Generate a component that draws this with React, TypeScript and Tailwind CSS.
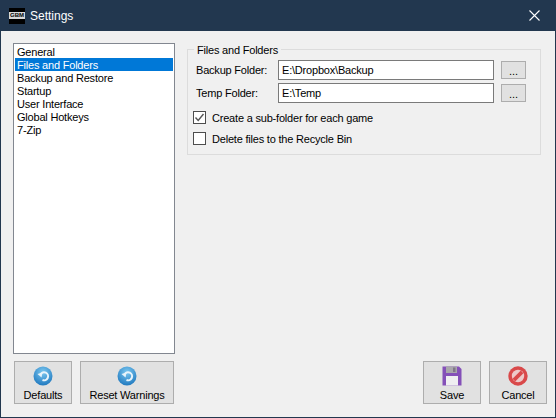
import React from "react";

const font = { fontFamily: '"Liberation Sans", Arial, sans-serif' };

function Refresh() {
  return (
    <svg width="20" height="20" viewBox="0 0 20 20">
      <defs>
        <radialGradient id="blue" cx="50%" cy="30%" r="75%">
          <stop offset="0%" stopColor="#7cc8f0" />
          <stop offset="100%" stopColor="#1a74bc" />
        </radialGradient>
      </defs>
      <circle cx="10" cy="10" r="9.5" fill="url(#blue)" />
      <path d="M7.5 8.5 A4 4 0 1 1 9.5 14" fill="none" stroke="#e8f4fb" strokeWidth="2" />
      <path d="M4.5 8 L9.5 6.5 L8.5 11.5 Z" fill="#e8f4fb" />
    </svg>
  );
}

function Floppy() {
  return (
    <svg width="20" height="20" viewBox="0 0 20 20">
      <path d="M0.5 0.5 H17 L19.5 3 V19.5 H0.5 Z" fill="#8450b8" />
      <rect x="4" y="0.5" width="11" height="6.5" fill="#a9a7ab" />
      <rect x="11" y="1.5" width="2.5" height="4.5" fill="#7f7688" />
      <rect x="4" y="10" width="12" height="9.5" fill="#efeff1" />
    </svg>
  );
}

function Stop() {
  return (
    <svg width="20" height="20" viewBox="0 0 20 20">
      <circle cx="10" cy="10" r="9.7" fill="#d9494a" />
      <circle cx="10" cy="10" r="6.2" fill="#eec9c9" />
      <path d="M4.6 12.8 L12.8 4.6 L15.4 7.2 L7.2 15.4 Z" fill="#d9494a" />
    </svg>
  );
}

function ActionButton({ w, label, icon }: { w: string; label: string; icon: React.ReactNode }) {
  return (
    <div className={`${w} h-[43px] bg-[#e1e1e1] border border-[#adadad] flex flex-col items-center text-[11px] tracking-[-0.2px] leading-[14px] text-black`}>
      <div className="h-[25px] pt-[4px] flex items-start justify-center">{icon}</div>
      <span className="mt-[1px]">{label}</span>
    </div>
  );
}

function FolderRow({ label, value }: { label: string; value: string }) {
  return (
    <div className="flex items-center h-[20px]">
      <span className="w-[90px] pl-[8px] text-[11px] tracking-[-0.2px] whitespace-nowrap">{label}</span>
      <div className="w-[216px] h-[20px] bg-white border border-[#7a7a7a] pl-[3px] text-[11px] tracking-[-0.2px] leading-[18px]">{value}</div>
      <div className="ml-[7px] w-[25px] h-[18px] bg-[#e1e1e1] border border-[#adadad] text-[11px] leading-[19px] text-center">...</div>
    </div>
  );
}

function CheckRow({ label, checked }: { label: string; checked?: boolean }) {
  return (
    <div className="flex items-center h-[13px] pl-[5px]">
      <div className="w-[13px] h-[13px] bg-white border border-[#4d4d4d] flex items-center justify-center">
        {checked && (
          <svg width="11" height="11" viewBox="0 0 11 11">
            <path d="M1.5 5.5 L4.2 8.5 L9.5 2" fill="none" stroke="#555" strokeWidth="1.4" />
          </svg>
        )}
      </div>
      <span className="ml-[6px] text-[11px] tracking-[-0.2px] leading-[14px]">{label}</span>
    </div>
  );
}

export default function App() {
  const items = ["General", "Files and Folders", "Backup and Restore", "Startup", "User Interface", "Global Hotkeys", "7-Zip"];
  return (
    <div style={font} className="w-[556px] h-[418px] flex flex-col bg-[#f0f0f0] border-x border-b border-[#22374f] text-black overflow-hidden">
      <div className="h-[31px] shrink-0 bg-[#22374f] flex items-center text-white text-[12px]">
        <div className="ml-[8px] w-[16px] h-[16px] bg-black flex items-center justify-center">
          <span className="w-full text-center bg-[#d8d8d8] text-black text-[6px] leading-[7px] font-bold">GBM</span>
        </div>
        <span className="ml-[5px]">Settings</span>
        <svg className="ml-auto mr-[15px]" width="11" height="11" viewBox="0 0 11 11">
          <path d="M0.5 0.5 L10.5 10.5 M10.5 0.5 L0.5 10.5" stroke="#fff" strokeWidth="1.1" />
        </svg>
      </div>
      <div className="flex-1 flex pl-[12px] pr-[8px] pt-[12px] pb-[13px]">
        <div className="w-[162px] flex flex-col">
          <div className="h-[311px] bg-white border border-[#828790] px-[1px] pt-[1px] text-[11px] tracking-[-0.2px] leading-[15px]">
            {items.map((t, i) => (
              <div key={t} className={i === 1 ? "bg-[#0078d7] text-white pl-[2px] h-[13px]" : "pl-[2px] h-[13px]"}>{t}</div>
            ))}
          </div>
          <div className="mt-[7px] flex gap-[8px] pl-[1px]">
            <ActionButton w="w-[58px]" label="Defaults" icon={<Refresh />} />
            <ActionButton w="w-[94px]" label="Reset Warnings" icon={<Refresh />} />
          </div>
        </div>
        <div className="flex-1 flex flex-col ml-[12px]">
          <div className="relative mt-[6px] h-[106px] w-[354px] border border-[#dcdcdc] pt-[10px] flex flex-col">
            <span className="absolute -top-[7px] left-[6px] bg-[#f0f0f0] px-[3px] text-[11px] tracking-[-0.2px] leading-[14px]">Files and Folders</span>
            <div className="flex flex-col gap-[3px]">
              <FolderRow label="Backup Folder:" value="E:\Dropbox\Backup" />
              <FolderRow label="Temp Folder:" value="E:\Temp" />
            </div>
            <div className="mt-[8px] flex flex-col gap-[8px]">
              <CheckRow label="Create a sub-folder for each game" checked />
              <CheckRow label="Delete files to the Recycle Bin" />
            </div>
          </div>
          <div className="mt-auto flex justify-end gap-[8px]">
            <ActionButton w="w-[58px]" label="Save" icon={<Floppy />} />
            <ActionButton w="w-[58px]" label="Cancel" icon={<Stop />} />
          </div>
        </div>
      </div>
    </div>
  );
}
